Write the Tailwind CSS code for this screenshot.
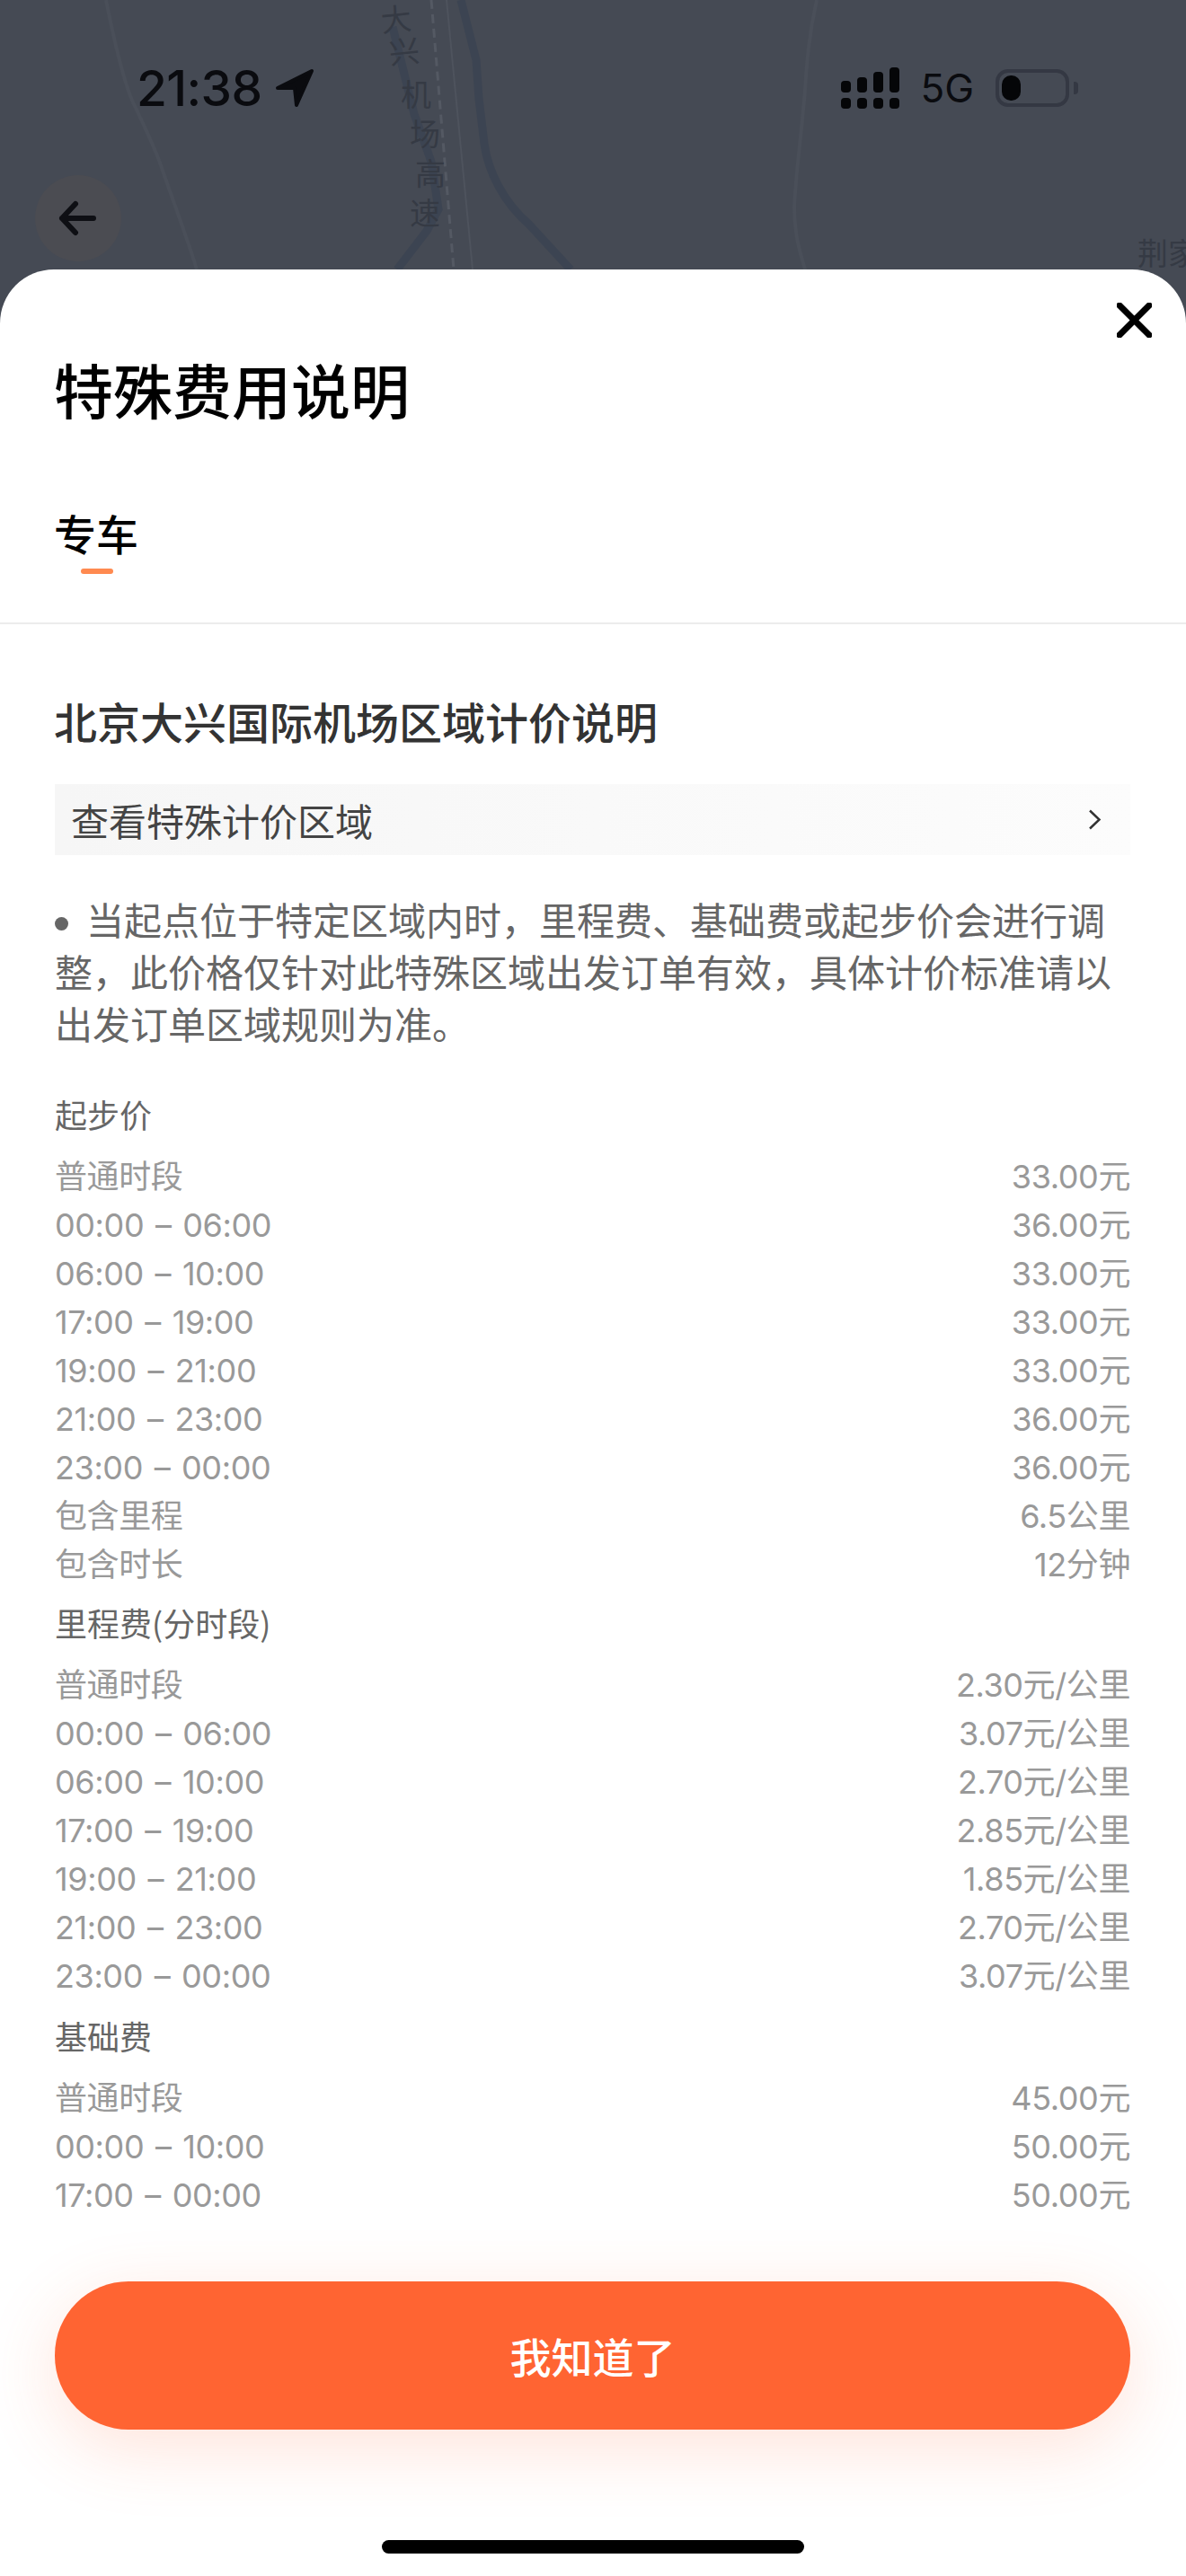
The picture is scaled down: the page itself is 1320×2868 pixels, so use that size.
<!DOCTYPE html>
<html lang="zh-CN">
<head>
  <meta charset="UTF-8" />
  <meta name="viewport" content="width=device-width, initial-scale=1.0" />
  <title>特殊费用说明</title>
  <script src="https://cdn.jsdelivr.net/npm/@tailwindcss/browser@4"></script>
</head>
<body class="bg-[#454a54] font-['Inter','Noto_Sans_CJK_SC',sans-serif]">
<div class="w-[1320px] h-[2868px] overflow-hidden flex flex-col">

  <!-- map behind the sheet -->
  <div class="relative h-[300px] shrink-0">
    <svg class="absolute inset-0" width="1320" height="300" viewBox="0 0 1320 300" fill="none">
      <path d="M118 0 C130 60 140 100 151 120 C165 150 175 170 181 190 C195 230 210 270 219 300" stroke="#4a4f59" stroke-width="4" />
      <path d="M909 0 C900 40 898 70 896 100 C892 150 886 190 884 230 C884 260 890 280 896 300" stroke="#4a4f59" stroke-width="4" />
      <path d="M513 0 L530 67 L533 110 L539 160 C543 190 560 225 589 250 L635 300" stroke="#3c4452" stroke-width="9" />
      <path d="M437 30 L461 127 L480 180 L488 233 L475 257 L442 300" stroke="#3c4452" stroke-width="9" />
      <path d="M480 0 L505 300" stroke="#545963" stroke-width="3" stroke-dasharray="10 6" />
      <path d="M497 0 L526 300" stroke="#4e535d" stroke-width="2" />
      <g fill="#353a44" font-size="34" font-family="Noto Sans CJK SC, sans-serif">
        <text x="424" y="34" transform="rotate(-6 441 22)">大</text>
        <text x="433" y="70" transform="rotate(-6 450 58)">兴</text>
        <text x="446" y="118">机</text>
        <text x="456" y="162">场</text>
        <text x="462" y="206">高</text>
        <text x="456" y="250">速</text>
        <text x="1266" y="295">荆家</text>
      </g>
    </svg>

    <!-- status bar -->
    <div class="relative flex justify-between pt-[67px] pl-[152px] pr-[120px] h-[140px]">
      <div class="flex items-center gap-[14px] h-[62px]">
        <span class="text-[55px] leading-[62px] font-medium text-[#0a0b0f] tracking-[-0.6px]">21:38</span>
        <svg width="44" height="44" viewBox="0 0 44 44"><path d="M3 22 L41 3 L24 41 L22 22 Z" fill="#0a0b0f" stroke="#0a0b0f" stroke-width="4" stroke-linejoin="round" /></svg>
      </div>
      <div class="flex items-center h-[62px]">
        <div class="grid grid-cols-4 gap-x-[7px] gap-y-[6px] w-[65px] items-end">
          <span class="h-[13px] rounded-[4px] bg-[#050608]"></span>
          <span class="h-[17px] rounded-[4px] bg-[#050608]"></span>
          <span class="h-[23px] rounded-[4px] bg-[#050608]"></span>
          <span class="h-[28px] rounded-[4px] bg-[#050608]"></span>
          <span class="h-[12px] rounded-[4px] bg-[#050608]"></span>
          <span class="h-[12px] rounded-[4px] bg-[#050608]"></span>
          <span class="h-[12px] rounded-[4px] bg-[#050608]"></span>
          <span class="h-[12px] rounded-[4px] bg-[#050608]"></span>
        </div>
        <span class="ml-[23px] text-[44px] leading-[62px] text-[#0a0b0f]">5G</span>
        <div class="ml-[24px] w-[82px] h-[42px] rounded-[14px] border-[4px] border-[#343843] pl-[3px] pt-[3px]">
          <div class="w-[21px] h-[28px] rounded-[10px] bg-[#050608]"></div>
        </div>
        <div class="ml-[5px] w-[5px] h-[14px] rounded-r-[4px] bg-[#343843]"></div>
      </div>
    </div>

    <button class="relative ml-[39px] mt-[55px] w-[96px] h-[96px] rounded-full bg-[#4b4c52] flex items-center justify-center">
      <svg width="44" height="40" viewBox="0 0 44 40" fill="none" stroke="#0e0f14" stroke-width="6" stroke-linecap="round" stroke-linejoin="round"><path d="M39 20 H4 M19 4 L4 20 L19 36" /></svg>
    </button>
  </div>

  <!-- sheet -->
  <div class="relative flex-1 bg-white rounded-t-[60px] font-['Noto_Sans_CJK_SC',sans-serif]">
    <button class="absolute top-[37px] left-[1243px] w-[39px] h-[39px]">
      <svg width="39" height="39" viewBox="0 0 39 39" fill="none" stroke="#000" stroke-width="7" stroke-linecap="round"><path d="M3 3 L36 36 M36 3 L3 36" /></svg>
    </button>

    <h1 class="pt-[94px] pl-[60px] text-[66px] leading-[76px] font-medium text-black">特殊费用说明</h1>

    <div class="mt-[93px] pl-[60px]">
      <div class="text-[47px] leading-[60px] font-medium text-black">专车</div>
      <div class="mt-[10px] ml-[30px] w-[36px] h-[6px] rounded-full bg-[#ff8a50]"></div>
    </div>

    <div class="mt-[54px] h-[2px] bg-[#ececec]"></div>

    <div class="pl-[61px] pr-[62px]">
      <h2 class="mt-[77px] -ml-[1px] text-[48px] leading-[60px] font-medium text-[#333]">北京大兴国际机场区域计价说明</h2>

      <div class="mt-[41px] h-[79px] pl-[18px] pr-[32px] flex items-center justify-between bg-gradient-to-r from-[#f6f6f6] to-[#fcfcfc]">
        <span class="text-[42px] text-[#444]">查看特殊计价区域</span>
        <svg width="15" height="23" viewBox="0 0 15 23" fill="none" stroke="#333" stroke-width="2.5"><path d="M2 1.5 L12.5 11.5 L2 21.5" /></svg>
      </div>

      <p class="mt-[42px] text-[42px] leading-[58px] text-[#666]"><span class="inline-block w-[15px] h-[15px] rounded-full bg-[#666] mr-[20px] align-[5px]"></span>当起点位于特定区域内时，里程费、基础费或起步价会进行调整，此价格仅针对此特殊区域出发订单有效，具体计价标准请以出发订单区域规则为准。</p>

      <div class="mt-[45px] text-[36px] leading-[54px] text-[#666]">起步价</div>
      <div class="mt-[16px] text-[36px] leading-[54px] text-[#999] tracking-[-0.4px] [word-spacing:3px] font-['Inter','Noto_Sans_CJK_SC',sans-serif]">
        <div class="flex justify-between"><span>普通时段</span><span>33.00元</span></div>
        <div class="flex justify-between"><span>00:00 – 06:00</span><span>36.00元</span></div>
        <div class="flex justify-between"><span>06:00 – 10:00</span><span>33.00元</span></div>
        <div class="flex justify-between"><span>17:00 – 19:00</span><span>33.00元</span></div>
        <div class="flex justify-between"><span>19:00 – 21:00</span><span>33.00元</span></div>
        <div class="flex justify-between"><span>21:00 – 23:00</span><span>36.00元</span></div>
        <div class="flex justify-between"><span>23:00 – 00:00</span><span>36.00元</span></div>
        <div class="flex justify-between"><span>包含里程</span><span>6.5公里</span></div>
        <div class="flex justify-between"><span>包含时长</span><span>12分钟</span></div>
      </div>

      <div class="mt-[10px] text-[36px] leading-[54px] text-[#666]">里程费(分时段)</div>
      <div class="mt-[16px] text-[36px] leading-[54px] text-[#999] tracking-[-0.4px] [word-spacing:3px] font-['Inter','Noto_Sans_CJK_SC',sans-serif]">
        <div class="flex justify-between"><span>普通时段</span><span>2.30元/公里</span></div>
        <div class="flex justify-between"><span>00:00 – 06:00</span><span>3.07元/公里</span></div>
        <div class="flex justify-between"><span>06:00 – 10:00</span><span>2.70元/公里</span></div>
        <div class="flex justify-between"><span>17:00 – 19:00</span><span>2.85元/公里</span></div>
        <div class="flex justify-between"><span>19:00 – 21:00</span><span>1.85元/公里</span></div>
        <div class="flex justify-between"><span>21:00 – 23:00</span><span>2.70元/公里</span></div>
        <div class="flex justify-between"><span>23:00 – 00:00</span><span>3.07元/公里</span></div>
      </div>

      <div class="mt-[12px] text-[36px] leading-[54px] text-[#666]">基础费</div>
      <div class="mt-[16px] text-[36px] leading-[54px] text-[#999] tracking-[-0.4px] [word-spacing:3px] font-['Inter','Noto_Sans_CJK_SC',sans-serif]">
        <div class="flex justify-between"><span>普通时段</span><span>45.00元</span></div>
        <div class="flex justify-between"><span>00:00 – 10:00</span><span>50.00元</span></div>
        <div class="flex justify-between"><span>17:00 – 00:00</span><span>50.00元</span></div>
      </div>

      <button class="mt-[69px] w-full h-[165px] rounded-[82px] bg-[#ff6432] text-white text-[46px] font-medium shadow-[0_20px_80px_rgba(255,100,50,0.18)]">我知道了</button>
    </div>

    <div class="mt-[123px] mx-auto w-[470px] h-[15px] rounded-full bg-black"></div>
  </div>
</div>
</body>
</html>
